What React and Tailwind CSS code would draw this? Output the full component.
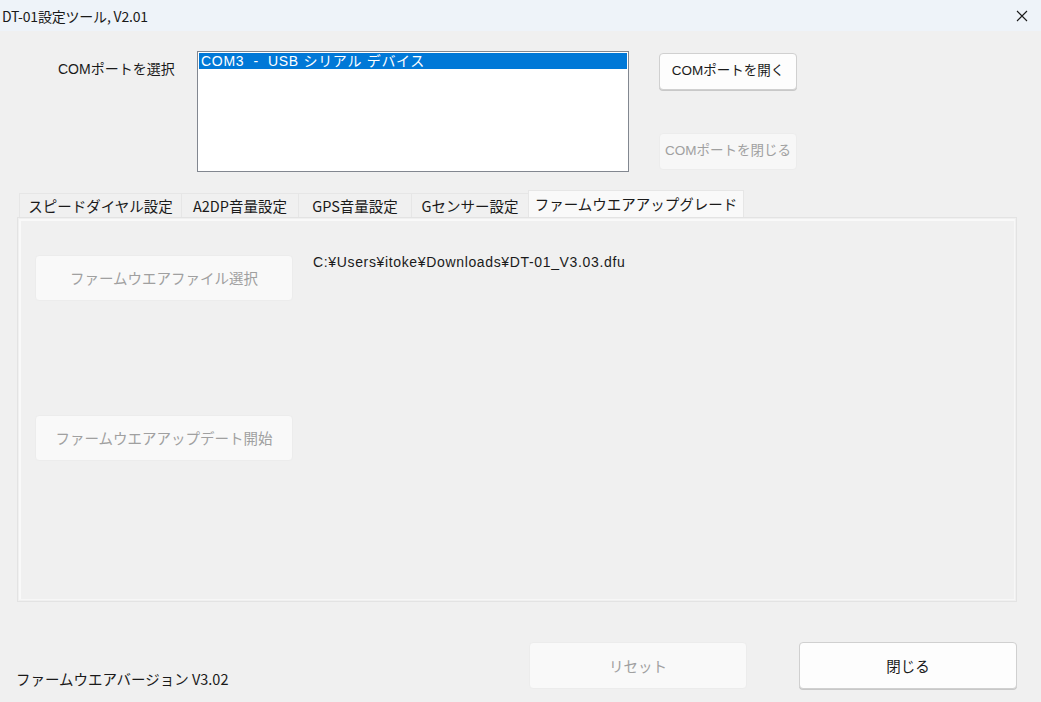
import React, { useState } from "react";

const FONT = { fontFamily: '"Noto Sans CJK JP", "Noto Sans", sans-serif' };
const MIXED = { fontFamily: '"Liberation Sans", "Noto Sans CJK JP", sans-serif' };

const tabs = [
  { title: "スピードダイヤル設定", width: "w-[162px]" },
  { title: "A2DP音量設定", width: "w-[117px]" },
  { title: "GPS音量設定", width: "w-[113px]" },
  { title: "Gセンサー設定", width: "w-[117px]" },
  { title: "ファームウエアアップグレード", width: "w-[216px]" },
];

const App = () => {
  // State
  const [activeTab, setActiveTab] = useState(4);

  return (
    <div className="w-[1041px] h-[702px] bg-[#f0f0f0] flex flex-col text-[#1a1a1a] overflow-hidden" style={FONT}>
      {/* Title bar */}
      <div className="h-[31px] bg-[#eef3f9] flex items-center justify-between pl-[2px] pr-[13px]">
        <div className="text-[14px] leading-none tracking-[-0.2px]">DT-01設定ツール, V2.01</div>
        <svg width="12" height="12" viewBox="0 0 12 12" className="mt-[1px]">
          <path d="M1 1 L11 11 M11 1 L1 11" stroke="#1a1a1a" strokeWidth="1.1" />
        </svg>
      </div>

      {/* COM port select */}
      <div className="flex pt-[20px] h-[160px]">
        <div className="w-[197px] pl-[58px] pt-[8px] text-[14px] leading-[20px]" style={MIXED}>COMポートを選択</div>
        <div className="w-[432px] h-[121px] bg-white border border-[#828790] p-[1px]">
          <div className="h-[16px] bg-[#0078d7] text-white text-[14px] leading-[16px] pl-[2px] whitespace-pre tracking-[0.7px]" style={MIXED}>
            {"COM3  -  USB シリアル デバイス"}
          </div>
        </div>
        <div className="ml-[30px] pt-[2px] flex flex-col gap-[43px]">
          <button className="w-[138px] h-[37px] bg-[#fdfdfd] border border-[#d0d0d0] rounded-[4px] text-[13.5px] shadow-[0_1px_0_#c8c8c8]" style={MIXED}>
            COMポートを開く
          </button>
          <button className="w-[138px] h-[37px] bg-[#f7f7f7] border border-[#ececec] rounded-[4px] text-[13.5px] text-[#a0a0a0]" style={MIXED}>
            COMポートを閉じる
          </button>
        </div>
      </div>

      {/* Tab strip */}
      <div className="flex items-end pl-[19px] h-[27px] mt-[-1px]">
        {tabs.map((tab, index) => (
          <div
            key={index}
            onClick={() => setActiveTab(index)}
            className={
              index === activeTab
                ? `${tab.width} h-[27px] bg-[#f9f9f9] border border-b-0 border-[#e6e6e6] text-[14.5px] leading-[25px] text-center cursor-default`
                : `${tab.width} h-[24px] bg-[#f0f0f0] border border-b-0 border-r-0 border-[#e6e6e6] text-[14.5px] leading-[23px] text-center cursor-default`
            }
          >
            {tab.title}
          </div>
        ))}
      </div>

      {/* Tab panel */}
      <div className="ml-[17px] w-[1000px] h-[385px] border border-[#e3e3e3] bg-[#f0f0f0] p-[1px]">
        <div className="w-full h-full border-t-2 border-l-2 border-[#f9f9f9] border-r border-b border-r-[#f7f7f7] border-b-[#f7f7f7] flex">
          <div className="pl-[14px] pt-[34px] flex flex-col gap-[114px]">
            <button className="w-[258px] h-[46px] bg-[#f9f9f9] border border-[#ececec] rounded-[4px] text-[14.5px] text-[#a0a0a0]">
              ファームウエアファイル選択
            </button>
            <button className="w-[258px] h-[46px] bg-[#f9f9f9] border border-[#ececec] rounded-[4px] text-[14.5px] text-[#a0a0a0]">
              ファームウエアアップデート開始
            </button>
          </div>
          <div className="pl-[20px] pt-[31px] text-[14px] leading-[20px] tracking-[0.65px]" style={MIXED}>
            C:¥Users¥itoke¥Downloads¥DT-01_V3.03.dfu
          </div>
        </div>
      </div>

      {/* Bottom bar */}
      <div className="flex items-start pt-[40px]">
        <div className="w-[529px] pl-[16px] pt-[27px] text-[14.5px] leading-[20px]">ファームウエアバージョン V3.02</div>
        <button className="w-[218px] h-[47px] bg-[#f9f9f9] border border-[#ececec] rounded-[4px] text-[14.5px] text-[#a0a0a0]">
          リセット
        </button>
        <button className="ml-[52px] w-[218px] h-[47px] bg-[#fdfdfd] border border-[#d0d0d0] rounded-[4px] text-[14.5px] shadow-[0_1px_0_#c8c8c8]">
          閉じる
        </button>
      </div>
    </div>
  );
};

export default App;
